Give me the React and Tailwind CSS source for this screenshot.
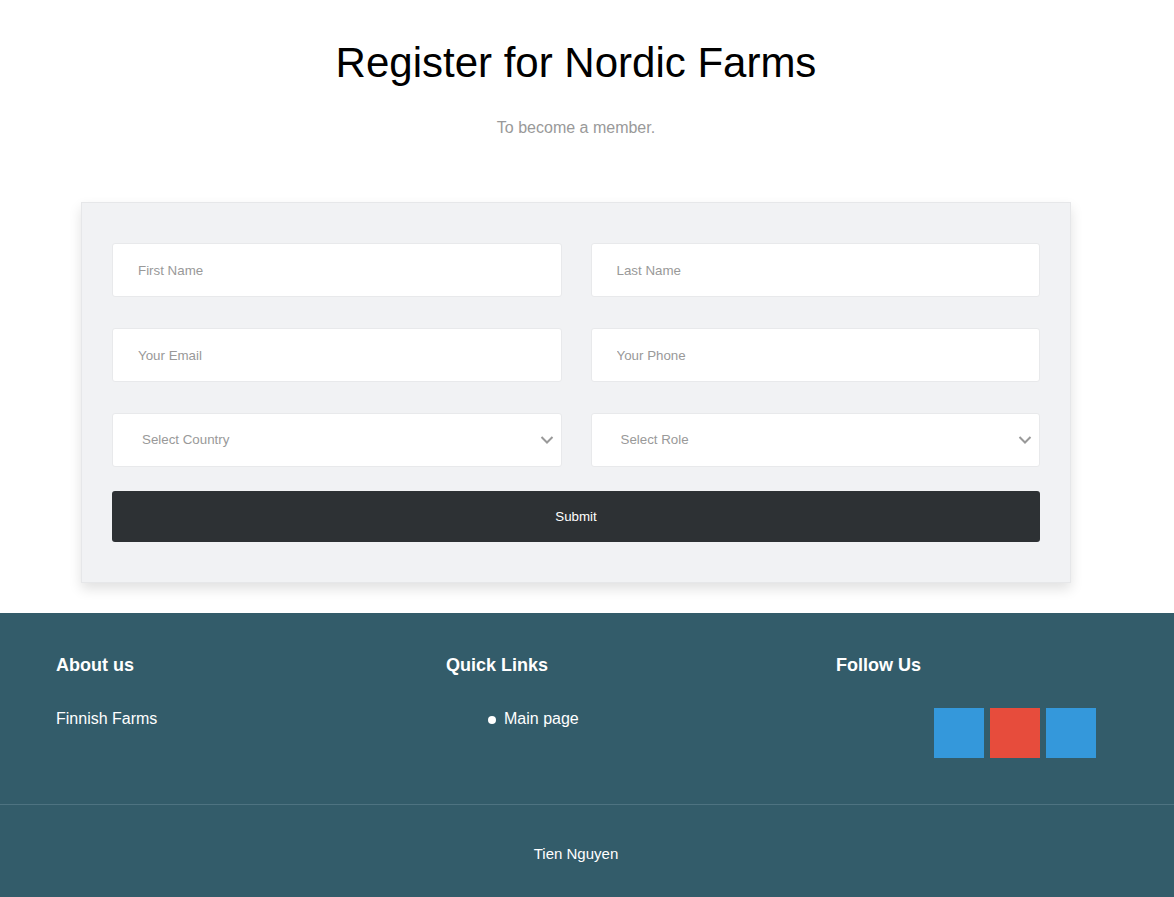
import React from "react";

function Chevron() {
    return (
        <svg width="14" height="9" viewBox="0 0 14 9" className="absolute right-[8px] top-1/2 -translate-y-1/2">
            <path d="M1.5 1.5 L7 7 L12.5 1.5" fill="none" stroke="#999" strokeWidth="2" />
        </svg>
    );
}

function Field({ placeholder }) {
    return (
        <input
            placeholder={placeholder}
            className="h-[54px] w-full rounded-[3px] border border-[#e8e9eb] bg-white px-[25px] text-[13.33px] text-[#555] outline-none placeholder:text-[#999]"
        />
    );
}

function SelectBox({ label }) {
    return (
        <div className="relative">
            <select
                defaultValue=""
                className="h-[54px] w-full appearance-none rounded-[3px] border border-[#e8e9eb] bg-white pl-[29px] text-[13.33px] text-[#999] outline-none"
            >
                <option value="" disabled>{label}</option>
            </select>
            <Chevron />
        </div>
    );
}

export default function App() {
    return (
        <div className="min-h-screen bg-white font-['Liberation_Sans',Arial,sans-serif]">
            {/* header */}
            <div className="pt-[38px] pr-[22px] text-center">
                <h1 className="text-[42px] leading-[50px] text-black">Register for Nordic Farms</h1>
                <p className="mt-[28px] text-[16px] text-[#999]">To become a member.</p>
            </div>

            {/* form card */}
            <div className="mx-[81px] mt-[62px] w-[990px] border border-[#e6e7e9] bg-[#f1f2f4] px-[30px] pt-[40px] pb-[40px] shadow-[0_6px_12px_rgba(0,0,0,0.12)]">
                <div className="grid grid-cols-2 gap-x-[29px] gap-y-[31px]">
                    <Field placeholder="First Name" />
                    <Field placeholder="Last Name" />
                    <Field placeholder="Your Email" />
                    <Field placeholder="Your Phone" />
                    <SelectBox label="Select Country" />
                    <SelectBox label="Select Role" />
                </div>
                <button className="mt-[24px] h-[51px] w-full rounded-[3px] bg-[#2d3134] text-[13.33px] text-white">
                    Submit
                </button>
            </div>

            {/* footer */}
            <footer className="mt-[30px] bg-[#335c6a] text-white">
                <div className="flex h-[191px] pl-[56px] pt-[42px]">
                    <div className="w-[390px]">
                        <h3 className="text-[18px] font-bold leading-[20px]">About us</h3>
                        <p className="mt-[32px] text-[16px]">Finnish Farms</p>
                    </div>
                    <div className="w-[390px]">
                        <h3 className="text-[18px] font-bold leading-[20px]">Quick Links</h3>
                        <ul className="mt-[32px] pl-[42px] text-[16px]">
                            <li className="flex items-center gap-[8px]">
                                <span className="mt-[1px] h-[8px] w-[8px] rounded-full bg-white" />
                                Main page
                            </li>
                        </ul>
                    </div>
                    <div className="w-[338px]">
                        <h3 className="text-[18px] font-bold leading-[20px]">Follow Us</h3>
                        <div className="mt-[33px] ml-[98px] flex gap-[6px]">
                            <span className="h-[50px] w-[50px] bg-[#3498db]" />
                            <span className="h-[50px] w-[50px] bg-[#e74c3c]" />
                            <span className="h-[50px] w-[50px] bg-[#3498db]" />
                        </div>
                    </div>
                </div>
                <div className="flex h-[100px] items-center justify-center border-t border-[#4e7381] pr-[22px]">
                    <p className="text-[15px]">Tien Nguyen</p>
                </div>
            </footer>
        </div>
    );
}
